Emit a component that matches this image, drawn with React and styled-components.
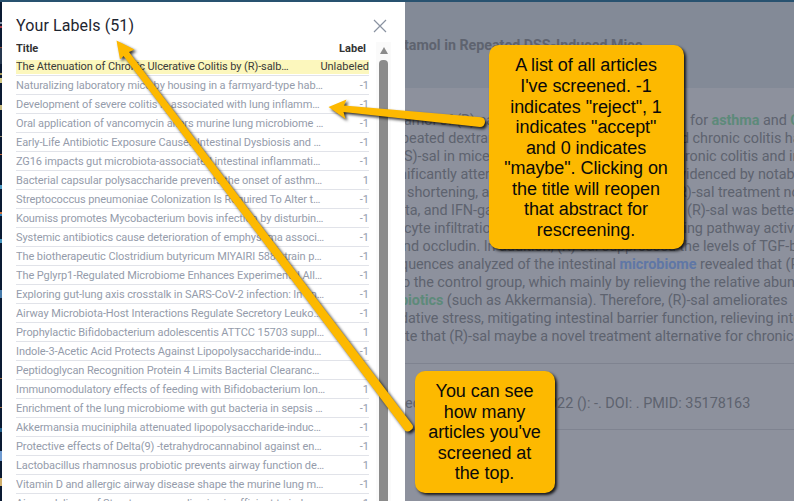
import React from "react";
import styled, { createGlobalStyle } from "styled-components";

const Global = createGlobalStyle`
  * { box-sizing: border-box; }
  html, body { margin: 0; padding: 0; overflow: hidden; }
  body { font-family: Roboto, sans-serif; }
`;

const Page = styled.div`
  position: relative;
  width: 794px;
  height: 501px;
  overflow: hidden;
  display: grid;
  grid-template-rows: 2px 499px;
  background: #8d919d;
`;

const TopBar = styled.div`
  background: #285270;
`;

const Body = styled.div`
  display: grid;
  grid-template-columns: 2px 403px 389px;
  min-height: 0;
`;

const EdgeStrip = styled.div`
  background: linear-gradient(
    #0a1a33 0 20px, #8995ac 20px 22px, #0a1a33 22px 24px, #b13f4c 24px 26px, #0a1a33 26px 45px,
    #8e4a38 45px 46px, #26384f 46px 62px, #0a1a33 62px 71px, #a99c60 71px 73px, #0a1a33 73px 76px,
    #d1c887 76px 81px, #0a1a33 81px 103px, #c4b77b 103px 108px, #0a1a33 108px 134px, #9b8b6c 134px 135px,
    #0a1a33 135px 152px, #c26a3c 152px 153px, #0a1a33 153px 183px, #4d9ac4 183px 187px, #0a1a33 187px 210px,
    #c9713f 210px 212px, #2f7fb8 212px 214px, #0a1a33 214px 237px, #4393bd 237px 241px, #0a1a33 241px 288px,
    #467aaa 288px 296px, #0a1a33 296px 376px, #9b6a3c 376px 377px, #0a1a33 377px 405px, #a06a40 405px 406px,
    #0a1a33 406px 426px, #1f5f8b 426px 430px, #0a1a33 430px 449px, #6f9bd1 449px 459px, #0a1a33 459px 476px,
    #cfae6b 476px 484px, #0a1a33 484px
  );
`;

const Panel = styled.section`
  background: #fff;
  display: flex;
  flex-direction: column;
  overflow: hidden;
`;

const PanelHeader = styled.header`
  display: flex;
  align-items: center;
  justify-content: space-between;
  height: 38px;
  padding: 10px 18px 0 14px;
`;

const PanelTitle = styled.h1`
  margin: 0;
  font-weight: 400;
  font-size: 16px;
  line-height: 20px;
  letter-spacing: 0.11px;
  color: #1e2530;
`;

const CloseIcon = styled.svg`
  width: 14px;
  height: 14px;
  stroke: #8a92a1;
  stroke-width: 1.2;
  fill: none;
`;

const PanelBody = styled.div`
  display: grid;
  grid-template-columns: 353px 15px;
  column-gap: 7px;
  padding-left: 14px;
  flex: 1;
  min-height: 0;
`;

const Table = styled.div`
  overflow: hidden;
`;

const TableHead = styled.div`
  display: flex;
  justify-content: space-between;
  height: 20px;
  padding: 0 3px 0 0;
  font-size: 11px;
  font-weight: 700;
  line-height: 17px;
  color: #333;
`;

const Row = styled.div`
  display: flex;
  justify-content: space-between;
  height: ${(p) => (p.$active ? 14 : 19)}px;
  border-top: ${(p) => (p.$active ? "0" : "1px solid #e1e3e9")};
  margin-bottom: ${(p) => (p.$active ? 0.5 : 0)}px;
  background: ${(p) => (p.$active ? "#fcf7bd" : "transparent")};
  color: ${(p) => (p.$active ? "#3a3a38" : "#959cab")};
  font-size: 11px;
  line-height: ${(p) => (p.$active ? 13 : 20)}px;
  white-space: nowrap;
`;

const RowTitle = styled.span`
  letter-spacing: -0.09px;
`;

const Scrollbar = styled.div`
  display: flex;
  flex-direction: column;
  align-items: center;
  background: #fafafa;
  padding-top: 5px;
  gap: 6px;
  margin-top: 2px;
`;

const ScrollArrow = styled.div`
  border: 4.5px solid transparent;
  border-top: 0;
  border-bottom: 7px solid #8b8b8b;
`;

const ScrollThumb = styled.div`
  width: 9px;
  flex: 1;
  border-radius: 4px 4px 0 0;
  background: #8b8b8b;
`;

const Article = styled.main`
  display: grid;
  grid-template-rows: 86px 276px 66px 1fr;
  background: #8d919d;
  color: #5e636f;
  overflow: hidden;
`;

const ArticleHeader = styled.div`
  background: #838a97;
  padding-top: 32px;
  font-size: 14.25px;
  line-height: 22px;
  font-weight: 700;
  white-space: nowrap;
`;

const Abstract = styled.div`
  padding-top: 24px;
  border-bottom: 1px solid #7f8390;
  font-size: 14.4px;
  letter-spacing: -0.04px;
`;

const Line = styled.div`
  display: grid;
  grid-template-columns: ${(p) => (p.$split ? "84px 113px" : "1fr")};
  justify-content: space-between;
  height: 18px;
  line-height: 18px;
  white-space: nowrap;
`;

const Piece = styled.span`
  display: block;
  overflow: hidden;
  text-indent: ${(p) => p.$indent || 0}px;
`;

const Keyword = styled.b`
  color: ${(p) => (p.$blue ? "#5f77a6" : "#5d8a7a")};
`;

const Citation = styled.div`
  display: grid;
  grid-template-columns: 10px auto;
  justify-content: start;
  align-items: center;
  column-gap: 134px;
  padding-top: 14px;
  border-bottom: 1px solid #7f8390;
  font-size: 14.45px;
  white-space: nowrap;
`;

const ArrowLayer = styled.svg`
  position: absolute;
  inset: 0;
  width: 794px;
  height: 501px;
  fill: #fdb900;
  filter: drop-shadow(2px 2px 1.5px rgba(0, 0, 0, 0.8));
`;

const Callout = styled.aside`
  position: absolute;
  left: ${(p) => p.$x}px;
  top: ${(p) => p.$y}px;
  width: ${(p) => p.$w}px;
  height: ${(p) => p.$h}px;
  display: flex;
  flex-direction: column;
  justify-content: center;
  padding-top: ${(p) => p.$shift || 0}px;
  padding-right: 1px;
  border-radius: 10px;
  background: #fdb900;
  box-shadow: 2px 2px 3px rgba(0, 0, 0, 0.85);
  color: #0a0a0a;
  font-family: "Liberation Sans", sans-serif;
  font-size: 18px;
  letter-spacing: -0.06px;
  line-height: 20.6px;
  text-align: center;
  white-space: nowrap;
`;

const rows = [
  ["Naturalizing laboratory mice by housing in a farmyard-type hab…", "-1"],
  ["Development of severe colitis is associated with lung inflamm…", "-1"],
  ["Oral application of vancomycin alters murine lung microbiome …", "-1"],
  ["Early-Life Antibiotic Exposure Causes Intestinal Dysbiosis and …", "-1"],
  ["ZG16 impacts gut microbiota-associated intestinal inflammati…", "-1"],
  ["Bacterial capsular polysaccharide prevents the onset of asthm…", "1"],
  ["Streptococcus pneumoniae Colonization Is Required To Alter t…", "-1"],
  ["Koumiss promotes Mycobacterium bovis infection by disturbin…", "-1"],
  ["Systemic antibiotics cause deterioration of emphysema associ…", "-1"],
  ["The biotherapeutic Clostridium butyricum MIYAIRI 588 strain p…", "-1"],
  ["The Pglyrp1-Regulated Microbiome Enhances Experimental All…", "-1"],
  ["Exploring gut-lung axis crosstalk in SARS-CoV-2 infection: In an…", "-1"],
  ["Airway Microbiota-Host Interactions Regulate Secretory Leuko…", "-1"],
  ["Prophylactic Bifidobacterium adolescentis ATTCC 15703 suppl…", "1"],
  ["Indole-3-Acetic Acid Protects Against Lipopolysaccharide-indu…", "-1"],
  ["Peptidoglycan Recognition Protein 4 Limits Bacterial Clearanc…", ""],
  ["Immunomodulatory effects of feeding with Bifidobacterium lon…", "1"],
  ["Enrichment of the lung microbiome with gut bacteria in sepsis …", "-1"],
  ["Akkermansia muciniphila attenuated lipopolysaccharide-induc…", "-1"],
  ["Protective effects of Delta(9) -tetrahydrocannabinol against en…", "-1"],
  ["Lactobacillus rhamnosus probiotic prevents airway function de…", "1"],
  ["Vitamin D and allergic airway disease shape the murine lung m…", "-1"],
  ["Airway delivery of Streptococcus salivarius is efficient to indu…", "-1"],
];

const splitLines = [
  ["amol of (R)-sal", -1, <>for <Keyword>asthma</Keyword> and <Keyword>COPD</Keyword></>, 9],
  ["peated dextran", -4, "d chronic colitis had", 0],
  ["S)-sal in mice", -1, "hronic colitis and in", -4],
  ["nificantly attenu", -6, "videnced by notable", -2],
  [" shortening, an", 2, "R)-sal treatment not", -3],
  ["ta, and IFN-gam", 0, "(R)-sal was better", 6],
  ["cyte infiltration", -1, "ling pathway activa", -1],
];

const fullLines = [
  [<>nd occludin. In addition, (R)-sal suppressed the levels of TGF-beta</>, -2],
  [<>quences analyzed of the intestinal <Keyword $blue>microbiome</Keyword> revealed that (R)-sal</>, -5],
  [<>o the control group, which mainly by relieving the relative abundance</>, -3],
  [<><Keyword>biotics</Keyword> (such as Akkermansia). Therefore, (R)-sal ameliorates</>, -5],
  [<>dative stress, mitigating intestinal barrier function, relieving intes</>, -5],
  [<>te that (R)-sal maybe a novel treatment alternative for chronic</>, 0],
];

const listNote = [
  "A list of all articles",
  "I've screened. -1",
  'indicates "reject", 1',
  'indicates "accept"',
  "and 0 indicates",
  '"maybe". Clicking on',
  "the title will reopen",
  "that abstract for",
  "rescreening.",
];

const countNote = ["You can see", "how many", "articles you've", "screened at", "the top."];

export default function App() {
  return (
    <Page>
      <Global />
      <TopBar />
      <Body>
        <EdgeStrip />
        <Panel>
          <PanelHeader>
            <PanelTitle>Your Labels (51)</PanelTitle>
            <CloseIcon viewBox="0 0 14 14">
              <path d="M1 1 L13 13 M13 1 L1 13" />
            </CloseIcon>
          </PanelHeader>
          <PanelBody>
            <Table>
              <TableHead>
                <span>Title</span>
                <span>Label</span>
              </TableHead>
              <Row $active>
                <RowTitle>The Attenuation of Chronic Ulcerative Colitis by (R)-salb…</RowTitle>
                <span>Unlabeled</span>
              </Row>
              {rows.map(([title, label]) => (
                <Row key={title}>
                  <RowTitle>{title}</RowTitle>
                  <span>{label}</span>
                </Row>
              ))}
            </Table>
            <Scrollbar>
              <ScrollArrow />
              <ScrollThumb />
            </Scrollbar>
          </PanelBody>
        </Panel>
        <Article>
          <ArticleHeader>
            <Piece $indent={-1}>tamol in Repeated DSS-Induced Mice</Piece>
          </ArticleHeader>
          <Abstract>
            {splitLines.map(([left, leftIndent, right, rightIndent]) => (
              <Line $split key={left}>
                <Piece $indent={leftIndent}>{left}</Piece>
                <Piece $indent={rightIndent}>{right}</Piece>
              </Line>
            ))}
            {fullLines.map(([text, indent], i) => (
              <Line key={i}>
                <Piece $indent={indent}>{text}</Piece>
              </Line>
            ))}
          </Abstract>
          <Citation>
            <Piece>ec</Piece>
            <Piece>022 (): -. DOI: . PMID: 35178163</Piece>
          </Citation>
        </Article>
      </Body>
      <ArrowLayer viewBox="0 0 794 501">
        <path d="M116.5 40.5 L134.5 49.5 L129 52 L412.5 425 Q414 428 411 430 Q407.500 433 404.500 430 L123.500 56 L120 59.500 Z" />
        <path d="M328.500 107 L346.500 99.500 L344 105.500 L481 117.300 Q485 118 485 122 Q484.500 127 480 127 L343.500 112 L345.500 119 Z" />
      </ArrowLayer>
      <Callout $x={489} $y={45} $w={195} $h={204} $shift={2}>
        {listNote.map((t) => <span key={t}>{t}</span>)}
      </Callout>
      <Callout $x={415} $y={371} $w={140} $h={122} $shift={1}>
        {countNote.map((t) => <span key={t}>{t}</span>)}
      </Callout>
    </Page>
  );
}
